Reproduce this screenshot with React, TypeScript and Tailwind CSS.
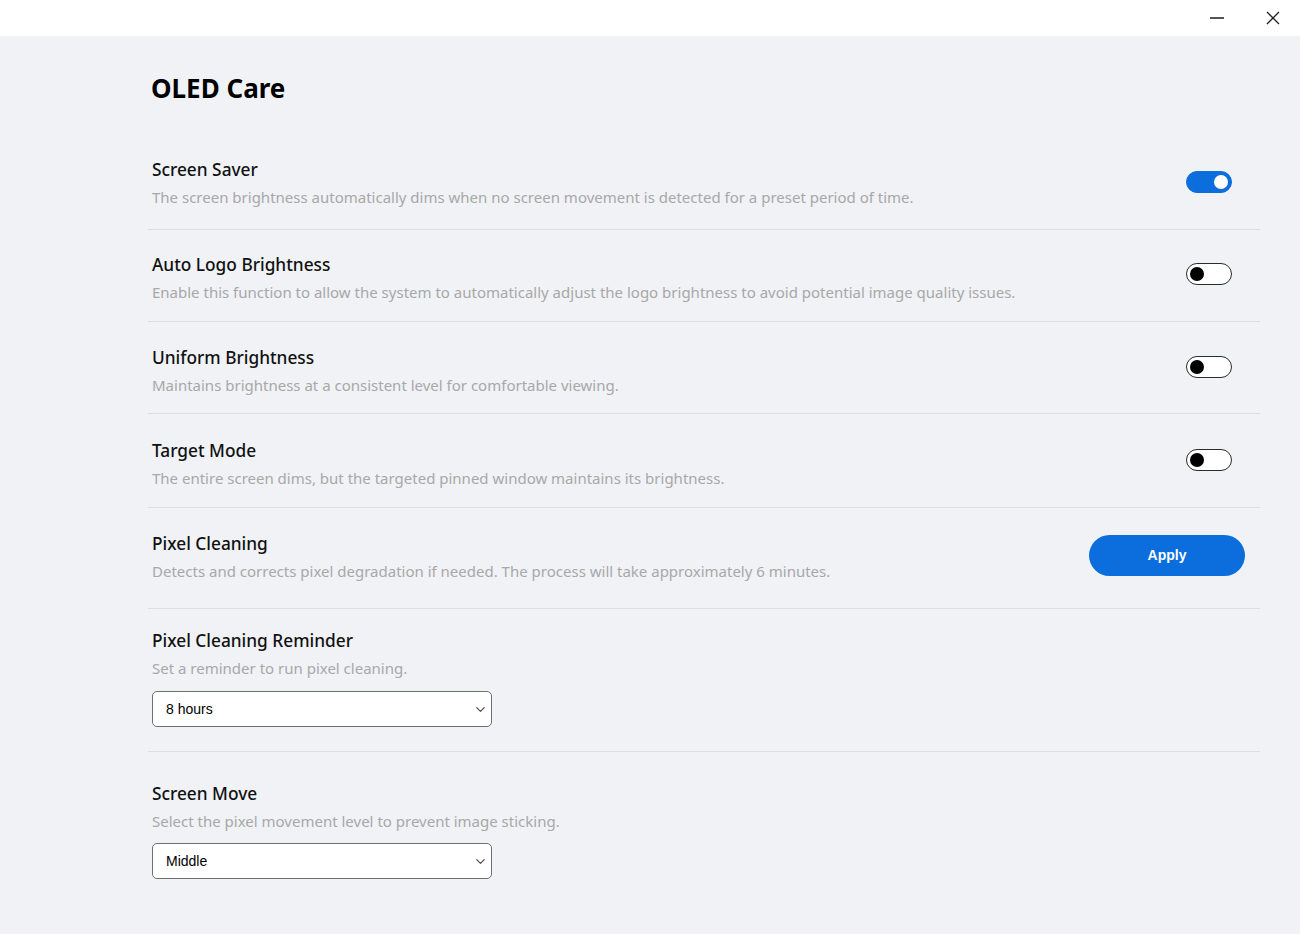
import { ChevronDown } from "lucide-react";

type ToggleProps = { on?: boolean };

function Toggle({ on = false }: ToggleProps) {
  return (
    <div
      className={
        on
          ? "flex h-[22px] w-[46px] items-center justify-end rounded-full border-[1.5px] border-[#0b6edc] bg-[#0b6edc] px-[3px]"
          : "flex h-[22px] w-[46px] items-center justify-start rounded-full border-[1.5px] border-[#2b2b2b] bg-white px-[3px]"
      }
    >
      <span className={on ? "h-[14px] w-[14px] rounded-full bg-white" : "h-[14px] w-[14px] rounded-full bg-black"} />
    </div>
  );
}

function Select({ value }: { value: string }) {
  return (
    <div className="flex h-[36px] w-[340px] items-center justify-between rounded-[5px] border border-[#707070] bg-white pl-[13px] pr-[3px] font-['Liberation_Sans',Arial,sans-serif] text-[14px] text-black">
      <span>{value}</span>
      <ChevronDown size={15} strokeWidth={1.8} className="text-[#444]" />
    </div>
  );
}

function Text({ title, desc }: { title: string; desc: string }) {
  return (
    <div className="pl-1">
      <div className="text-[17.3px] leading-[24px] font-medium text-[#111]">{title}</div>
      <div className="mt-[4px] text-[15px] leading-[22px] text-[#a8a8a8]">{desc}</div>
    </div>
  );
}

function ToggleRow({
  title,
  desc,
  on,
  pad,
  lift,
}: {
  title: string;
  desc: string;
  on?: boolean;
  pad: string;
  lift: string;
}) {
  return (
    <div className={"flex items-center justify-between border-b border-[#dcdee2] pr-7 " + pad}>
      <Text title={title} desc={desc} />
      <div className={lift}>
        <Toggle on={on} />
      </div>
    </div>
  );
}

export default function App() {
  return (
    <div className="min-h-[934px] w-full bg-[#f0f2f6] font-['Noto_Sans','Open_Sans',sans-serif]">
      <div className="flex h-[36px] items-center justify-end bg-white pr-[20px]">
        <div className="mr-[42px] h-[1.5px] w-[14px] bg-[#555]" />
        <svg width="14" height="14" viewBox="0 0 14 14" className="text-[#222]">
          <path d="M1 1 L13 13 M13 1 L1 13" stroke="currentColor" strokeWidth="1.3" fill="none" />
        </svg>
      </div>

      <div className="pl-[148px] pr-[40px]">
        <h1 className="pt-[34px] pl-[3px] text-[26px] leading-[36px] font-bold text-black">OLED Care</h1>

        <div className="mt-[52px]">
          <ToggleRow
            pad="pb-[21px]"
            lift="mb-[2px]"
            on
            title="Screen Saver"
            desc="The screen brightness automatically dims when no screen movement is detected for a preset period of time."
          />
          <ToggleRow
            pad="pt-[23px] pb-[18px]"
            lift="mb-[8px]"
            title="Auto Logo Brightness"
            desc="Enable this function to allow the system to automatically adjust the logo brightness to avoid potential image quality issues."
          />
          <ToggleRow
            pad="pt-[24px] pb-[17px]"
            lift="mb-[8px]"
            title="Uniform Brightness"
            desc="Maintains brightness at a consistent level for comfortable viewing."
          />
          <ToggleRow
            pad="pt-[25px] pb-[18px]"
            lift="mb-[8px]"
            title="Target Mode"
            desc="The entire screen dims, but the targeted pinned window maintains its brightness."
          />

          <div className="flex items-center justify-between border-b border-[#dcdee2] pt-[24px] pb-[26px] pr-[15px]">
            <Text
              title="Pixel Cleaning"
              desc="Detects and corrects pixel degradation if needed. The process will take approximately 6 minutes."
            />
            <button className="mb-[4px] h-[41px] w-[156px] rounded-full bg-[#0b6edc] font-['Liberation_Sans',Arial,sans-serif] text-[14px] font-bold text-white">
              Apply
            </button>
          </div>

          <div className="border-b border-[#dcdee2] pt-[20px] pb-[24px]">
            <Text title="Pixel Cleaning Reminder" desc="Set a reminder to run pixel cleaning." />
            <div className="mt-[12px] pl-1">
              <Select value="8 hours" />
            </div>
          </div>

          <div className="pt-[30px]">
            <Text title="Screen Move" desc="Select the pixel movement level to prevent image sticking." />
            <div className="mt-[11px] pl-1">
              <Select value="Middle" />
            </div>
          </div>
        </div>
      </div>
    </div>
  );
}
